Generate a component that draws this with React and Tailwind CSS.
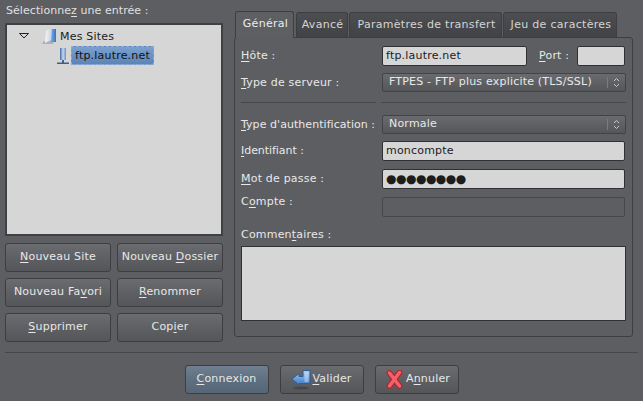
const font = { fontFamily: '"DejaVu Sans", sans-serif' };

function M({ children }) {
  return <span className="underline underline-offset-2 decoration-1">{children}</span>;
}

function Btn({ children, icon, className = "" }) {
  return (
    <div className={"h-[29px] flex items-center justify-center rounded-[3px] border border-[#3d3e42] bg-gradient-to-b from-[#6b6c70] via-[#5f6064] to-[#55565a] text-[#e8e8e8] tracking-[0.2px] whitespace-pre pb-[1px] " + className}>
      {icon}
      <span>{children}</span>
    </div>
  );
}

function Input({ children, className = "" }) {
  return (
    <div className={"h-[20px] rounded-[2px] border border-[#303135] bg-[#d6d6d6] text-[#1c1c1c] px-[3px] flex items-center tracking-[0.2px] " + className}>
      {children}
    </div>
  );
}

function Select({ children }) {
  return (
    <div className="h-[19px] flex-1 rounded-[2px] border border-[#424347] bg-gradient-to-b from-[#6a6b6f] to-[#55565a] text-[#e8e8e8] flex items-center pl-[6px] pb-[1px] tracking-[0.2px]">
      <span className="flex-1">{children}</span>
      <span className="w-[18px] h-[11px] border-l border-[#7b7c80] flex items-center justify-center">
        <svg width="7" height="11" viewBox="0 0 7 11" fill="none" stroke="#c8c8c8" strokeWidth="1">
          <path d="M1 4 L3.5 1.5 L6 4" />
          <path d="M1 7 L3.5 9.5 L6 7" />
        </svg>
      </span>
    </div>
  );
}

function Row({ label, children, className = "", labelClass = "tracking-[0.2px]" }) {
  return (
    <div className={"flex items-center " + className}>
      <div className={"w-[141px] shrink-0 text-[#e8e8e8] whitespace-nowrap " + labelClass}>{label}</div>
      {children}
    </div>
  );
}

function Tab({ children, active, className = "" }) {
  return (
    <div
      className={
        "flex items-center justify-center rounded-t-[3px] border border-b-0 border-[#3d3e42] tracking-[0.3px] " +
        (active
          ? "h-[27px] bg-[#5e5f63] text-[#ececec] relative top-[1px] pb-[2px] "
          : "h-[25px] bg-gradient-to-b from-[#4d4e52] to-[#414246] text-[#d4d4d4] ") +
        className
      }
    >
      {children}
    </div>
  );
}

function FolderIcon() {
  return (
    <svg width="18" height="18" viewBox="0 0 18 18">
      <defs>
        <linearGradient id="f1" x1="0" x2="1" y1="0" y2="0">
          <stop offset="0" stopColor="#f4f6f8" />
          <stop offset="1" stopColor="#c6d0dc" />
        </linearGradient>
        <linearGradient id="f2" x1="0" x2="1" y1="0" y2="0">
          <stop offset="0" stopColor="#8db8ea" />
          <stop offset="1" stopColor="#2f74c8" />
        </linearGradient>
      </defs>
      <path d="M2 14 L12 14 L11 17 L0 17 Z" fill="#9aa3ad" opacity="0.7" />
      <path d="M8 2 L14 2 L14 15 L8 15 Z" fill="url(#f2)" />
      <path d="M4 4 L10 1 L9 13 L3 16 Z" fill="url(#f1)" />
    </svg>
  );
}

function ServerIcon() {
  return (
    <svg width="14" height="18" viewBox="0 0 14 18">
      <defs>
        <linearGradient id="s1" x1="0" x2="1" y1="0" y2="0">
          <stop offset="0" stopColor="#3d69a8" />
          <stop offset="0.5" stopColor="#c8d8ee" />
          <stop offset="1" stopColor="#6d8fc0" />
        </linearGradient>
      </defs>
      <rect x="4" y="1" width="6" height="12" fill="url(#s1)" />
      <path d="M6 13 H8 V16 H6 Z" fill="#51627c" />
      <path d="M1 15.5 H13 V17 H1 Z" fill="#3d5d8c" />
    </svg>
  );
}

function ArrowIcon() {
  return (
    <svg width="21" height="21" viewBox="0 0 21 21" className="-ml-[4px]">
      <defs>
        <linearGradient id="a1" x1="0" x2="0" y1="0" y2="1">
          <stop offset="0" stopColor="#a9cdf3" />
          <stop offset="1" stopColor="#3d7ac2" />
        </linearGradient>
      </defs>
      <ellipse cx="10" cy="19" rx="8" ry="1.5" fill="#3a3a3d" opacity="0.6" />
      <path d="M1 10 L8 4.5 L8 7.5 L12 7.5 L12 1.5 L19 1.5 L19 14.5 L8 14.5 L8 16 Z" fill="url(#a1)" stroke="#2d5f9e" strokeWidth="1" strokeLinejoin="round" />
      <path d="M13.5 3 H17.5 V13 H13.5 Z" fill="#dbe7f5" opacity="0.45" />
    </svg>
  );
}

function CrossIcon() {
  return (
    <svg width="17" height="19" viewBox="0 0 17 19" className="mr-[3px]">
      <path d="M3.5 3 L13.5 16 M13.5 2.5 L3.5 16" stroke="#b3222a" strokeWidth="5.5" strokeLinecap="round" fill="none" />
      <path d="M3.5 3 L13.5 16 M13.5 2.5 L3.5 16" stroke="#f2606a" strokeWidth="3.5" strokeLinecap="round" fill="none" />
    </svg>
  );
}

export default function App() {
  return (
    <div style={font} className="w-[643px] h-[401px] bg-[#5d5e62] text-[11px] leading-[14px] overflow-hidden flex flex-col">
      <div className="flex pl-[5px] pt-[3px]">
        <div className="w-[218px] flex flex-col shrink-0">
          <div className="h-[20px] pl-[1px] text-[#e0e0e0] tracking-[0.06px] pt-[1px]">
            Sélectionne<M>z</M> une entrée :
          </div>
          <div className="h-[213px] border-2 border-[#3f4044] bg-[#d6d6d6] text-[#1c1c1c] tracking-[0.2px]">
            <div className="flex items-center h-[21px] pl-[12px]">
              <svg width="10" height="6" viewBox="0 0 10 6" fill="none" stroke="#222" strokeWidth="1">
                <path d="M0.5 0.5 H9.5 L5 5 Z" />
              </svg>
              <span className="ml-[13px]"><FolderIcon /></span>
              <span className="pt-[2px]">Mes Sites</span>
            </div>
            <div className="flex items-center h-[19px] pl-[49px]">
              <ServerIcon />
              <span className="ml-[1px] h-[19px] px-[3px] flex items-center border border-dashed border-[#8ca9cf] bg-gradient-to-b from-[#7ba0cf] to-[#5b84b8] text-[#111]">ftp.lautre.net</span>
            </div>
          </div>
          <div className="grid grid-cols-2 gap-x-[6px] gap-y-[6px] mt-[7px]">
            <Btn><M>N</M>ouveau Site</Btn>
            <Btn>Nouveau <M>D</M>ossier</Btn>
            <Btn>Nouveau Fa<M>v</M>ori</Btn>
            <Btn><M>R</M>enommer</Btn>
            <Btn><M>S</M>upprimer</Btn>
            <Btn>Cop<M>i</M>er</Btn>
          </div>
        </div>
        <div className="ml-[11px] w-[399px] flex flex-col pt-[8px]">
          <div className="flex pl-[1px] items-end h-[26px]">
            <Tab active className="w-[59px] pl-[2px]">Général</Tab>
            <Tab className="w-[52px] ml-[2px] pl-[1px]">Avancé</Tab>
            <Tab className="w-[153px] ml-[1px] pl-[2px]">Paramètres de transfert</Tab>
            <Tab className="w-[114px] ml-[1px] pl-[2px]">Jeu de caractères</Tab>
          </div>
          <div className="h-[300px] rounded-[3px] border border-[#3d3e42] pl-[6px] pr-[6px] pt-[8px]">
            <Row label={<><M>H</M>ôte :</>}>
              <Input className="w-[145px]">ftp.lautre.net</Input>
              <div className="w-[50px] pl-[12px] text-[#e8e8e8] tracking-[0.2px] whitespace-nowrap"><M>P</M>ort :</div>
              <Input className="w-[48px]" />
            </Row>
            <Row label={<><M>T</M>ype de serveur :</>} className="mt-[7px]">
              <Select>FTPES - FTP plus explicite (TLS/SSL)</Select>
            </Row>
            <div className="flex mt-[10px] gap-[5px]">
              <div className="w-[135px] h-px bg-[#46474b]" />
              <div className="flex-1 h-px bg-[#46474b]" />
            </div>
            <Row label={<><M>T</M>ype d'authentification :</>} labelClass="tracking-[0.05px]" className="mt-[12px]">
              <Select>Normale</Select>
            </Row>
            <Row label={<><M>I</M>dentifiant :</>} labelClass="tracking-[-0.05px]" className="mt-[7px]">
              <Input className="flex-1 mr-[1px]">moncompte</Input>
            </Row>
            <Row label={<><M>M</M>ot de passe :</>} className="mt-[8px]">
              <Input className="flex-1 mr-[1px]"><span className="text-[12px] tracking-[-0.5px]">●●●●●●●●</span></Input>
            </Row>
            <Row label={<span className="relative -top-[5px]">C<M>o</M>mpte :</span>} className="mt-[8px]">
              <div className="flex-1 mr-[1px] h-[20px] rounded-[2px] border border-[#46474b]" />
            </Row>
            <div className="mt-[10px] h-[14px] pt-[1px] text-[#e8e8e8] tracking-[0.2px]">Commen<span className="underline underline-offset-2">t</span>aires :</div>
            <div className="mt-[5px] h-[75px] border border-[#303135] bg-[#d6d6d6]" />
          </div>
        </div>
      </div>
      <div className="mx-[5px] mt-[10px] h-px bg-[#46474b]" />
      <div className="flex justify-center gap-[11px] mt-[12px]">
        <Btn className="w-[84px] from-[#6f7f8f] via-[#5f7080] to-[#566676] border-[#3c4a58]"><M>C</M>onnexion</Btn>
        <Btn className="w-[84px] pl-[4px]" icon={<ArrowIcon />}><M>V</M>alider</Btn>
        <Btn className="w-[84px] pl-[3px]" icon={<CrossIcon />}>A<M>n</M>nuler</Btn>
      </div>
    </div>
  );
}
